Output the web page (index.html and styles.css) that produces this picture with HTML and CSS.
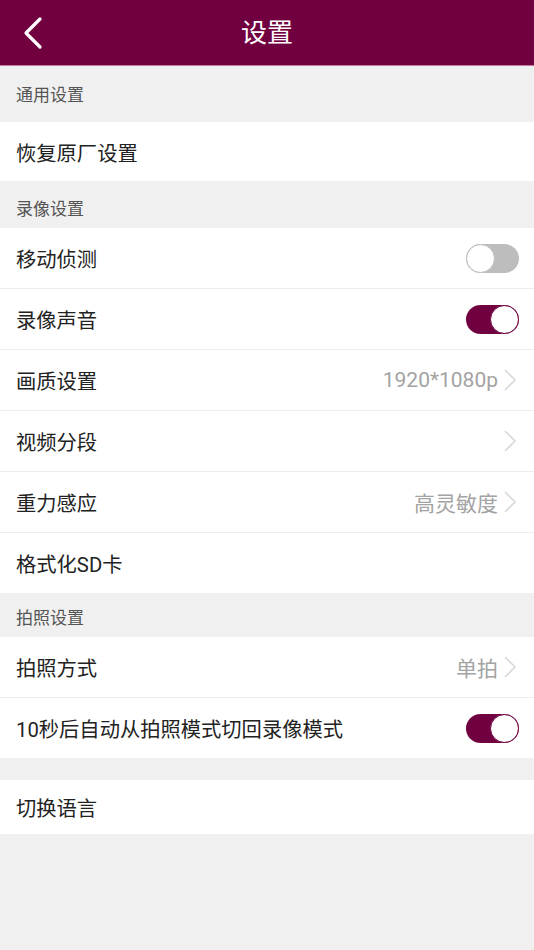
FILE: index.html
```html
<!DOCTYPE html>
<html lang="zh-CN">
<head>
<meta charset="utf-8">
<title>设置</title>
<link rel="stylesheet" href="styles.css">
</head>
<body>
<div class="page">
  <header class="topbar">
    <span class="back">
      <svg width="24" height="34" viewBox="0 0 24 34"><polyline points="18,3 4,17 18,31" fill="none" stroke="#fff" stroke-width="3.2" stroke-linecap="round" stroke-linejoin="round"/></svg>
    </span>
    <h1 class="title">设置</h1>
  </header>

  <div class="section s1">通用设置</div>
  <div class="group">
    <div class="row r-first"><span class="label">恢复原厂设置</span></div>
  </div>

  <div class="section s2">录像设置</div>
  <div class="group">
    <div class="row"><span class="label">移动侦测</span><span class="toggle"><span class="knob"></span></span></div>
    <div class="row"><span class="label">录像声音</span><span class="toggle on"><span class="knob"></span></span></div>
    <div class="row"><span class="label">画质设置</span><span class="value">1920*1080p</span><span class="chev"><svg width="14" height="22" viewBox="0 0 14 22"><polyline points="2,1 12,11 2,21" fill="none" stroke="#d9d9d9" stroke-width="1.6"/></svg></span></div>
    <div class="row"><span class="label">视频分段</span><span class="value"></span><span class="chev"><svg width="14" height="22" viewBox="0 0 14 22"><polyline points="2,1 12,11 2,21" fill="none" stroke="#d9d9d9" stroke-width="1.6"/></svg></span></div>
    <div class="row"><span class="label">重力感应</span><span class="value">高灵敏度</span><span class="chev"><svg width="14" height="22" viewBox="0 0 14 22"><polyline points="2,1 12,11 2,21" fill="none" stroke="#d9d9d9" stroke-width="1.6"/></svg></span></div>
    <div class="row"><span class="label">格式化SD卡</span></div>
  </div>

  <div class="section s3">拍照设置</div>
  <div class="group">
    <div class="row"><span class="label">拍照方式</span><span class="value">单拍</span><span class="chev"><svg width="14" height="22" viewBox="0 0 14 22"><polyline points="2,1 12,11 2,21" fill="none" stroke="#d9d9d9" stroke-width="1.6"/></svg></span></div>
    <div class="row"><span class="label">10秒后自动从拍照模式切回录像模式</span><span class="toggle on"><span class="knob"></span></span></div>
  </div>

  <div class="spacer"></div>
  <div class="group">
    <div class="row r-lang"><span class="label">切换语言</span></div>
  </div>
</div>
</body>
</html>
```

FILE: styles.css
```css
* { box-sizing: border-box; }
html, body { margin: 0; padding: 0; }
body {
  background: #f0f0f0;
  font-family: Roboto, "Noto Sans CJK SC", "Noto Sans", sans-serif;
  width: 534px;
  min-height: 950px;
}
.page { display: flex; flex-direction: column; }

.topbar {
  height: 66px;
  background: #710040;
  border-bottom: 1px solid #c47a9f;
  display: flex;
  align-items: center;
  justify-content: center;
  position: relative;
}
.back {
  position: absolute;
  left: 22px;
  top: 16px;
  display: flex;
}
.title {
  margin: 0;
  color: #fff;
  font-weight: normal;
  font-size: 26px;
  line-height: 1;
}

.section {
  color: #555;
  font-size: 17px;
  line-height: 20px;
  padding-left: 16px;
}
.s1 { height: 56px; padding-top: 19px; }
.s2 { height: 47px; padding-top: 18px; }
.s3 { height: 44px; padding-top: 15px; }

.group { background: #fff; display: flex; flex-direction: column; }
.row {
  height: 61px;
  display: flex;
  align-items: center;
  padding: 0 15px 0 16px;
  border-top: 1px solid #ececec;
}
.row:first-child { height: 60px; border-top: none; }
.r-first { height: 59px !important; }
.r-lang { height: 54px !important; }

.label {
  flex: 1;
  font-size: 20.3px;
  color: #222;
  white-space: nowrap;
}
.value {
  font-size: 21px;
  color: #a3a3a3;
  margin-right: 5px;
}
.chev { display: flex; margin-right: 2px; }

.toggle {
  width: 53px;
  height: 29px;
  border-radius: 15px;
  background: #bdbdbd;
  display: flex;
  align-items: center;
  justify-content: flex-start;
}
.toggle .knob {
  width: 29px;
  height: 29px;
  border-radius: 50%;
  background: #fff;
  border: 1.5px solid #bdbdbd;
}
.toggle.on { background: #710040; justify-content: flex-end; }
.toggle.on .knob { border-color: #710040; }

.spacer { height: 22px; }
```
